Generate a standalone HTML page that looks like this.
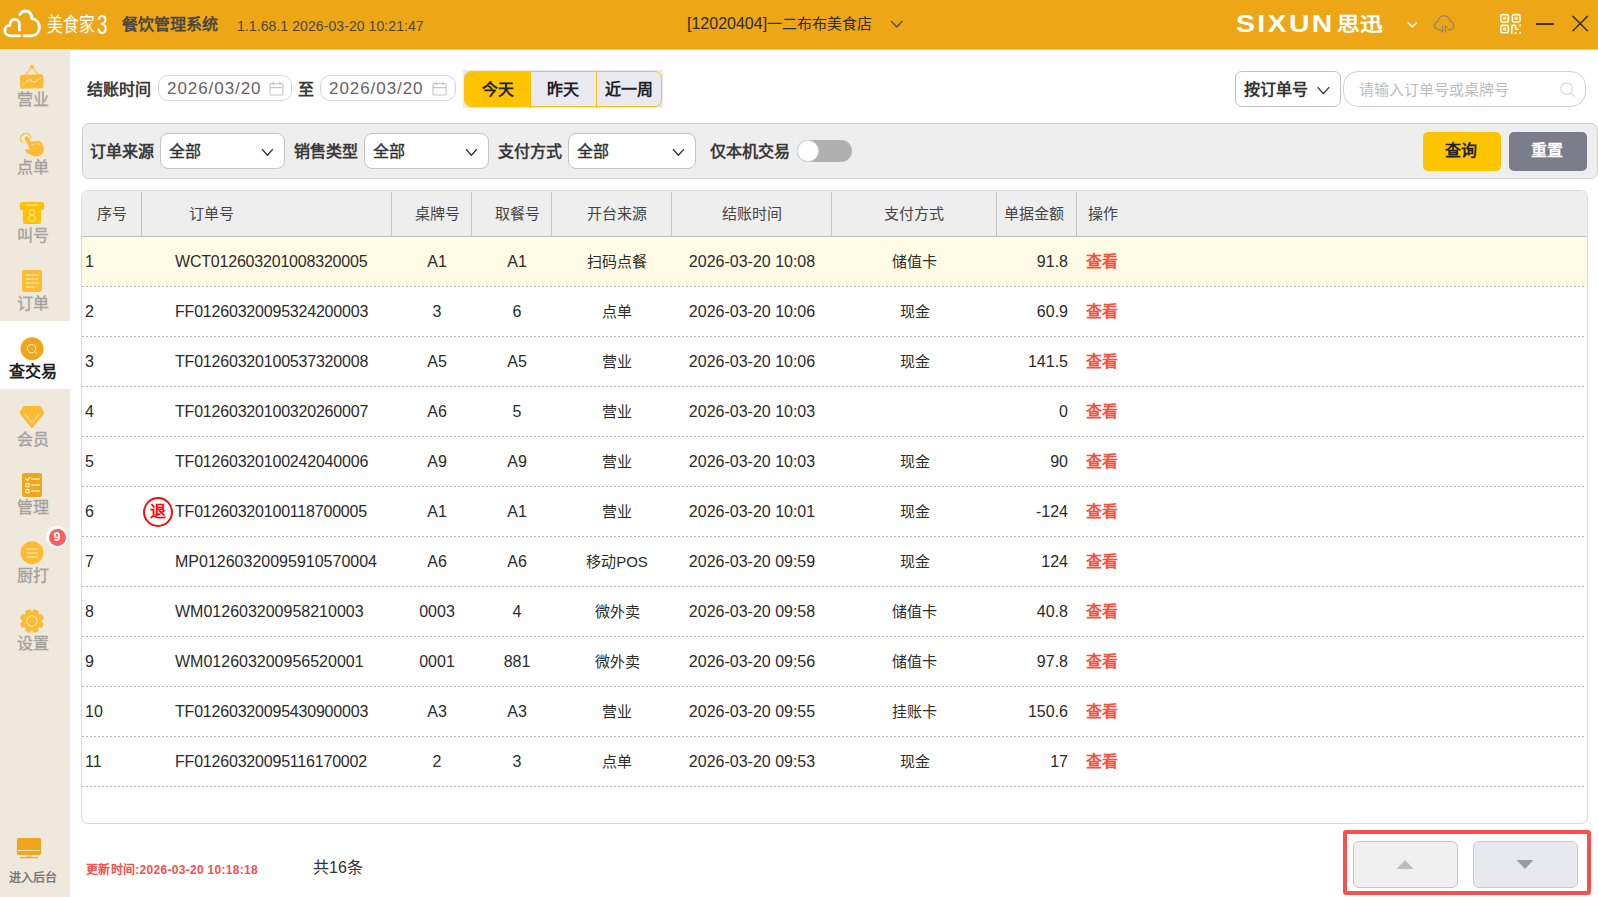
<!DOCTYPE html>
<html lang="zh-CN">
<head>
<meta charset="utf-8">
<title>美食家3 餐饮管理系统</title>
<style>
*{box-sizing:border-box;margin:0;padding:0}
html,body{width:1598px;height:897px;overflow:hidden;background:#fff}
body{position:relative;font-family:"Liberation Sans",sans-serif;color:#333;font-size:16px}
.a{position:absolute}
.t{position:absolute;white-space:nowrap;line-height:20px;height:20px}
.b{font-weight:bold}
svg{position:absolute;overflow:visible}
/* header */
#hd{left:0;top:0;width:1598px;height:49px;background:#EDA615;border-bottom:1px solid #F0A30C}
#hdline{left:70px;top:49px;width:1528px;height:1px;background:#CDD1DC}
/* sidebar */
#sb{left:0;top:49px;width:70px;height:848px;background:#EFE9DD}
#sbact{left:0;top:321px;width:70px;height:68px;background:#fff}
.sl{position:absolute;left:0;width:66px;text-align:center;font-size:16px;line-height:20px;height:20px;color:#A5A19E;-webkit-text-stroke:.35px;white-space:nowrap}
/* inputs */
.box{position:absolute;background:#fff;border:1px solid #C4C4C4}
.lbl{font-size:16px;font-weight:bold;color:#3A3A3A}
/* table */
#tb{left:81px;top:190px;width:1507px;height:634px;border:1px solid #DADADA;border-radius:7px;background:#fff}
#th{left:82px;top:191px;width:1505px;height:45px;background:#EEEEEE;border-radius:6px 6px 0 0}
#thl{left:82px;top:236px;width:1505px;height:1px;background:#BDBDBD}
.vs{position:absolute;top:192px;width:1px;height:44px;background:#C2C2C2}
.h{position:absolute;top:204px;font-size:15px;line-height:20px;height:20px;color:#444;white-space:nowrap}
.dl{position:absolute;left:82px;width:1502px;height:1px;background:repeating-linear-gradient(90deg,#B4B4B4 0,#B4B4B4 2px,transparent 2px,transparent 4px)}
.c{position:absolute;font-size:16px;line-height:20px;height:20px;color:#2B2B2B;white-space:nowrap}
.cc{transform:translateX(-50%)}
.cr{transform:translateX(-100%)}
.z{font-size:15px}
.v{color:#F5523C;font-weight:bold;font-size:16px}
</style>
</head>
<body>
<!-- ===== header ===== -->
<div class="a" id="hd"></div>
<div class="a" id="hdline"></div>
<svg style="left:0;top:0" width="120" height="49" viewBox="0 0 120 49" fill="none" stroke="#fff" stroke-width="2.8" stroke-linecap="round" stroke-linejoin="round">
<path d="M19.8 35.8H11.2C7 35.8 4.8 33.2 4.8 30.4C4.8 27.6 6.9 25.6 9.8 25.4C9.8 21.6 12 19.4 14.8 19.4C17.6 19.4 19.4 21.6 19.4 24.6V30.2"/>
<path d="M19.8 14.6C21 12.2 23 11 25.4 11C29.2 11 31.6 14 31.9 18.6C36.4 19.2 39.4 22.8 39.4 27.4C39.4 32 36.2 35.8 31.8 35.8H24"/>
</svg>
<div class="t" style="left:47px;top:13px;height:24px;line-height:24px;font-size:20px;color:#fff;font-weight:300;transform:scaleX(.79);transform-origin:0 50%">美食家</div>
<div class="t" style="left:97px;top:11px;height:28px;line-height:28px;font-size:27px;color:#fff;font-weight:300;transform:scaleX(.7);transform-origin:0 50%">3</div>
<div class="t b" style="left:122px;top:15px;font-size:16px;color:#4B4742">餐饮管理系统</div>
<div class="t" style="left:237px;top:16px;font-size:14px;letter-spacing:.08px;color:#4B4742">1.1.68.1 2026-03-20 10:21:47</div>
<div class="t" style="left:687px;top:14px;font-size:15px;color:#2E2B26"><span style="font-size:16px">[12020404]</span>一二布布美食店</div>
<svg style="left:889px;top:19px" width="16" height="12" viewBox="0 0 16 12" fill="none" stroke="#47506C" stroke-width="1.4" stroke-linecap="round" stroke-linejoin="round"><path d="M2.5 2.5L7.8 8L13 2.5"/></svg>
<!-- SIXUN logo -->
<div class="t b" style="left:1236px;top:12px;height:24px;line-height:24px;font-size:24px;color:#fff;transform:scaleX(1.185);transform-origin:0 50%;letter-spacing:2px">SIXUN</div>
<div class="t b" style="left:1337px;top:13px;height:24px;line-height:24px;font-size:19px;font-weight:900;color:#fff;transform:scaleX(1.2);transform-origin:0 50%">思迅</div>
<svg style="left:1404px;top:19px" width="16" height="12" viewBox="0 0 16 12" fill="none" stroke="#FFF8E8" stroke-width="1.5" stroke-linecap="round" stroke-linejoin="round"><path d="M4.1 3.7L8.3 7.9L12.5 3.7"/></svg>
<!-- cloud sync -->
<svg style="left:1432px;top:12px" width="24" height="24" viewBox="0 0 24 24" fill="none" stroke="#8C8676" stroke-width="1.2" stroke-linecap="round" stroke-linejoin="round">
<path d="M8.2 17.6H7C4.4 17.6 2.6 15.8 2.6 13.6C2.6 11.6 4 10 6 9.7C6.3 6.3 8.8 3.8 12 3.8C15.2 3.8 17.6 6 18 9.2C20.2 9.6 21.6 11.2 21.6 13.4C21.6 15.8 19.8 17.6 17.4 17.6H16.2"/>
<path d="M10.6 14V20M10.6 20L9.2 18.4M13.4 20V14M13.4 14L14.8 15.6"/>
</svg>
<!-- qr -->
<svg style="left:1499px;top:13px" width="24" height="22" viewBox="0 0 24 22" fill="none" stroke="#fff" stroke-width="1.6" stroke-linejoin="round">
<rect x="1.8" y="1.6" width="7.6" height="7.4" rx="1.6"/><rect x="13.4" y="1.6" width="7.6" height="7.4" rx="1.6"/><rect x="1.8" y="12.4" width="7.6" height="7.4" rx="1.6"/>
<rect x="4.6" y="4.4" width="2" height="1.8" stroke-width="1.2"/><rect x="16.2" y="4.4" width="2" height="1.8" stroke-width="1.2"/><rect x="4.6" y="15.2" width="2" height="1.8" stroke-width="1.2"/>
<path d="M12.8 20.2V12.4H16.6V16.2H19.2" stroke-linecap="round"/><path d="M21.2 12v.6M16.6 19.6v.6M21.2 19.6v.6" stroke-linecap="round" stroke-width="1.8"/>
</svg>
<div class="a" style="left:1536px;top:23px;width:18px;height:1.5px;background:#3A3428"></div>
<svg style="left:1570px;top:13px" width="20" height="20" viewBox="0 0 20 20" fill="none" stroke="#3A3428" stroke-width="1.5" stroke-linecap="round"><path d="M3 3.4L17.4 17.8M17.4 3.4L3 17.8"/></svg>
<!-- ===== sidebar ===== -->
<div class="a" id="sb"></div>
<div class="a" id="sbact"></div>
<!-- 营业 -->
<svg style="left:16px;top:60px" width="32" height="32" viewBox="16 60 32 32">
<circle cx="31.9" cy="66.7" r="2" fill="#FDBB33"/>
<path d="M31.9 66.7L25.6 75M31.9 66.7L38.1 75" stroke="#FDBB33" stroke-width="1.1" fill="none"/>
<rect x="20" y="74.4" width="23.4" height="14" rx="2.2" fill="#FDBB33" transform="rotate(-1.5 31.7 81.4)"/>
<path d="M23.6 84.4L29.7 79.4L33.8 82.6L40.3 78.3" stroke="#FFF3D6" stroke-width="1" fill="none" stroke-linecap="round" stroke-linejoin="round"/>
</svg>
<div class="sl" style="top:90px">营业</div>
<!-- 点单 -->
<svg style="left:16px;top:128px" width="32" height="32" viewBox="16 128 32 32">
<path d="M22.4 142.6A5.3 5.3 0 1 1 31.2 138.2" stroke="#FDBB33" stroke-width="1.2" fill="none" stroke-linecap="round"/>
<path d="M26.6 138.4L32.8 150.4" stroke="#FDBB33" stroke-width="4" stroke-linecap="round" fill="none"/>
<path d="M30.2 143.6C30.6 141.6 32.6 140.8 34 141.8C35 140.4 37 140.4 37.8 141.6C39 140.6 41 141.2 41.4 142.8C43.4 145 44.4 148 43.6 151C42.6 154.8 39.2 156.8 35.6 156.4C32.6 156.2 29.6 154.6 26.6 152.6C24.6 151.2 25.4 148.8 27.6 149C29 149.2 30.2 149.8 31.4 150.4Z" fill="#FDBB33"/>
<path d="M32.3 144.4v.6M35.6 143.4v.6M38.9 143.6v.6" stroke="#FFE9B8" stroke-width="1.1" stroke-linecap="round"/>
</svg>
<div class="sl" style="top:158px">点单</div>
<!-- 叫号 -->
<svg style="left:16px;top:196px" width="32" height="32" viewBox="16 196 32 32">
<rect x="19.9" y="202" width="24.3" height="8" rx="2" fill="#FFC107"/>
<path d="M22.9 208H41.1V222A2 2 0 0 1 39.1 224H24.9A2 2 0 0 1 22.9 222Z" fill="#FFC107"/>
<path d="M25.8 205H38.4" stroke="#FFE28C" stroke-width="1.5" stroke-linecap="round"/>
<circle cx="32" cy="212.3" r="2.7" fill="none" stroke="#FFECB0" stroke-width=".8"/>
<circle cx="32" cy="218.2" r="3.3" fill="none" stroke="#FFECB0" stroke-width=".8"/>
</svg>
<div class="sl" style="top:226px">叫号</div>
<!-- 订单 -->
<svg style="left:16px;top:264px" width="32" height="32" viewBox="16 264 32 32">
<rect x="22" y="270" width="20" height="22" rx="2.2" fill="#FDBB33"/>
<path d="M25.9 275H38.1M25.9 279H38.1M25.9 283H38.1M25.9 287H34.1" stroke="#FFE29C" stroke-width="1.5" stroke-linecap="round"/>
</svg>
<div class="sl" style="top:294px">订单</div>
<!-- 查交易 (active) -->
<svg style="left:16px;top:332px" width="32" height="32" viewBox="16 332 32 32">
<circle cx="32" cy="348.7" r="11.5" fill="#EEA61C"/>
<circle cx="31.6" cy="348.6" r="4.2" fill="none" stroke="#FFF6E0" stroke-width=".9"/>
<path d="M34.7 351.6L36.8 353.6" stroke="#FFF6E0" stroke-width=".9" stroke-linecap="round"/>
</svg>
<div class="sl b" style="top:362px;color:#222;left:0;-webkit-text-stroke:0">查交易</div>
<!-- 会员 -->
<svg style="left:16px;top:400px" width="32" height="32" viewBox="16 400 32 32">
<path d="M24.4 406H39.6Q40.4 406 40.9 406.8L44 411.9Q44.6 413 43.8 414L33.2 427.2Q32 428.4 30.8 427.2L20.2 414Q19.4 413 20 411.9L23.1 406.8Q23.6 406 24.4 406Z" fill="#FDBB33"/>
<path d="M25.3 414.4L32 423.2L38.8 414.4" stroke="#FFF0CC" stroke-width="1" fill="none" stroke-linecap="round" stroke-linejoin="round"/>
</svg>
<div class="sl" style="top:430px">会员</div>
<!-- 管理 -->
<svg style="left:16px;top:468px" width="32" height="32" viewBox="16 468 32 32">
<rect x="22" y="473" width="20" height="24" rx="2.2" fill="#EEA61C"/>
<path d="M31.8 479H39.2M31.8 485H39.2M31.8 491H39.2" stroke="#FCE7BC" stroke-width="1.6" stroke-linecap="round"/>
<path d="M25.6 478.8L27.4 480.4L30 477.4" stroke="#FFF6E0" stroke-width="1.2" fill="none" stroke-linecap="round" stroke-linejoin="round"/>
<circle cx="27.5" cy="485.2" r="1.8" fill="none" stroke="#FFF6E0" stroke-width="1.1"/>
<circle cx="27.5" cy="491.2" r="1.8" fill="none" stroke="#FFF6E0" stroke-width="1.1"/>
</svg>
<div class="sl" style="top:498px">管理</div>
<!-- 厨打 -->
<svg style="left:16px;top:536px" width="32" height="32" viewBox="16 536 32 32">
<circle cx="32" cy="552.7" r="11.5" fill="#FDBB33"/>
<path d="M26.4 548.9H37.6M26.4 552.9H37.6M26.4 556.9H37.6" stroke="#FFE29C" stroke-width="1.5"/>
</svg>
<div class="a" style="left:46px;top:526px;width:22px;height:22px;border-radius:11px;background:#fff"></div>
<div class="a b" style="left:48.5px;top:528.5px;width:17px;height:17px;border-radius:9px;background:#FF5C5C;color:#fff;font-size:12.5px;line-height:17px;text-align:center">9</div>
<div class="sl" style="top:566px">厨打</div>
<!-- 设置 -->
<svg style="left:16px;top:604px" width="32" height="32" viewBox="16 604 32 32">
<g transform="translate(31.9 621) rotate(22.5)" fill="#FDBB33">
<circle r="9.8"/>
<rect x="-2.9" y="-12" width="5.8" height="6" rx="1.9" transform="rotate(0)"/><rect x="-2.9" y="-12" width="5.8" height="6" rx="1.9" transform="rotate(45)"/><rect x="-2.9" y="-12" width="5.8" height="6" rx="1.9" transform="rotate(90)"/><rect x="-2.9" y="-12" width="5.8" height="6" rx="1.9" transform="rotate(135)"/><rect x="-2.9" y="-12" width="5.8" height="6" rx="1.9" transform="rotate(180)"/><rect x="-2.9" y="-12" width="5.8" height="6" rx="1.9" transform="rotate(225)"/><rect x="-2.9" y="-12" width="5.8" height="6" rx="1.9" transform="rotate(270)"/><rect x="-2.9" y="-12" width="5.8" height="6" rx="1.9" transform="rotate(315)"/>
<circle r="5.2" fill="none" stroke="#FFEFC6" stroke-width=".9"/>
</g>
</svg>
<div class="sl" style="top:634px">设置</div>
<!-- 进入后台 -->
<svg style="left:14px;top:834px" width="32" height="28" viewBox="14 834 32 28">
<rect x="16.9" y="837.9" width="24.2" height="17.2" rx="2.2" fill="#EEA61C"/>
<path d="M18 850.5H40" stroke="#FCEBC8" stroke-width=".9"/>
<path d="M26 855.4H32V857H26Z" fill="#F3C978"/>
<path d="M20 857.6H38" stroke="#EEA61C" stroke-width="1.3"/>
</svg>
<div class="sl" style="top:868px;font-size:12px;color:#6F6F72">进入后台</div>
<!-- ===== filter row 1 ===== -->
<div class="t lbl" style="left:87px;top:80px">结账时间</div>
<div class="box" style="left:158px;top:75px;width:134px;height:26px;border-radius:10px;border-color:#D6D6D6"></div>
<div class="t" style="left:167px;top:79px;font-size:17px;letter-spacing:.94px;color:#676363">2026/03/20</div>
<svg style="left:268px;top:80px" width="17" height="17" viewBox="0 0 17 17" fill="none" stroke="#C6C6C6" stroke-width="1.1"><rect x="2" y="3.6" width="13" height="11.4" rx="1"/><path d="M2 7.6H15M5.2 1.6V5M11.8 1.6V5"/></svg>
<div class="t lbl" style="left:298px;top:80px">至</div>
<div class="box" style="left:320px;top:75px;width:136px;height:26px;border-radius:10px;border-color:#D6D6D6"></div>
<div class="t" style="left:329px;top:79px;font-size:17px;letter-spacing:.94px;color:#676363">2026/03/20</div>
<svg style="left:431px;top:80px" width="17" height="17" viewBox="0 0 17 17" fill="none" stroke="#C6C6C6" stroke-width="1.1"><rect x="2" y="3.6" width="13" height="11.4" rx="1"/><path d="M2 7.6H15M5.2 1.6V5M11.8 1.6V5"/></svg>
<!-- segmented buttons -->
<div class="a" style="left:463px;top:70px;width:200px;height:38px;background:#E9E9F1"></div>
<div class="a" style="left:464px;top:71px;width:198px;height:36px;border:1px solid #FFC20E;border-radius:7px;overflow:hidden">
<div class="a" style="left:-1px;top:-1px;width:67px;height:36px;background:#FFC300"></div>
<div class="a" style="left:131px;top:0;width:1px;height:34px;background:#FFC20E"></div>
</div>
<div class="t b" style="left:482px;top:80px;font-size:16px;color:#222">今天</div>
<div class="t b" style="left:547px;top:80px;font-size:16px;color:#222">昨天</div>
<div class="t b" style="left:605px;top:80px;font-size:16px;color:#222">近一周</div>
<!-- search type + search box -->
<div class="box" style="left:1235px;top:71px;width:106px;height:36px;border-radius:7px;border-color:#C0C0C0"></div>
<div class="t lbl" style="left:1244px;top:80px;color:#333">按订单号</div>
<svg style="left:1315px;top:84px" width="16" height="14" viewBox="0 0 16 14" fill="none" stroke="#333" stroke-width="1.4" stroke-linecap="round" stroke-linejoin="round"><path d="M3 3.6L8.4 9.6L13.8 3.6"/></svg>
<div class="box" style="left:1343px;top:71px;width:243px;height:36px;border-radius:15px;border-color:#D0D0D0"></div>
<div class="t" style="left:1359px;top:80px;font-size:15px;color:#BDBDBD">请输入订单号或桌牌号</div>
<svg style="left:1558px;top:80px" width="20" height="20" viewBox="0 0 20 20" fill="none" stroke="#DDDDDD" stroke-width="1.3" stroke-linecap="round"><circle cx="8.6" cy="8.6" r="5.8"/><path d="M13 13L16.6 16.4"/></svg>
<!-- ===== filter row 2 ===== -->
<div class="a" style="left:82px;top:123px;width:1516px;height:56px;background:#EEEEEE;border:1px solid #CFCFCF;border-radius:7px"></div>
<div class="t lbl" style="left:90px;top:142px">订单来源</div>
<div class="box" style="left:160px;top:133px;width:125px;height:36px;border-radius:8px"></div>
<div class="t" style="left:169px;top:142px;font-size:16px;color:#2E2E2E;-webkit-text-stroke:.35px">全部</div>
<svg style="left:259px;top:146px" width="16" height="14" viewBox="0 0 16 14" fill="none" stroke="#333" stroke-width="1.4" stroke-linecap="round" stroke-linejoin="round"><path d="M3.4 3.6L8.4 9.2L13.4 3.6"/></svg>
<div class="t lbl" style="left:294px;top:142px">销售类型</div>
<div class="box" style="left:364px;top:133px;width:125px;height:36px;border-radius:8px"></div>
<div class="t" style="left:373px;top:142px;font-size:16px;color:#2E2E2E;-webkit-text-stroke:.35px">全部</div>
<svg style="left:463px;top:146px" width="16" height="14" viewBox="0 0 16 14" fill="none" stroke="#333" stroke-width="1.4" stroke-linecap="round" stroke-linejoin="round"><path d="M3.4 3.6L8.4 9.2L13.4 3.6"/></svg>
<div class="t lbl" style="left:498px;top:142px">支付方式</div>
<div class="box" style="left:568px;top:133px;width:128px;height:36px;border-radius:8px"></div>
<div class="t" style="left:577px;top:142px;font-size:16px;color:#2E2E2E;-webkit-text-stroke:.35px">全部</div>
<svg style="left:670px;top:146px" width="16" height="14" viewBox="0 0 16 14" fill="none" stroke="#333" stroke-width="1.4" stroke-linecap="round" stroke-linejoin="round"><path d="M3.4 3.6L8.4 9.2L13.4 3.6"/></svg>
<div class="t lbl" style="left:710px;top:142px">仅本机交易</div>
<div class="a" style="left:797px;top:140px;width:55px;height:22px;border-radius:11px;background:#B0B0B0"></div>
<div class="a" style="left:797px;top:140px;width:22px;height:22px;border-radius:11px;background:#fff;border:1px solid #D8D8D8"></div>
<div class="a" style="left:1423px;top:132px;width:78px;height:39px;border-radius:5px;background:#FFC400"></div>
<div class="t b" style="left:1445px;top:141px;font-size:16px;color:#222">查询</div>
<div class="a" style="left:1509px;top:132px;width:78px;height:39px;border-radius:5px;background:#7B7D8B"></div>
<div class="t b" style="left:1531px;top:141px;font-size:16px;color:#fff">重置</div>
<!-- ===== table ===== -->
<div class="a" id="tb"></div><div class="a" id="th"></div><div class="a" id="thl"></div>
<div class="vs" style="left:141px"></div>
<div class="vs" style="left:391px"></div>
<div class="vs" style="left:471px"></div>
<div class="vs" style="left:551px"></div>
<div class="vs" style="left:671px"></div>
<div class="vs" style="left:831px"></div>
<div class="vs" style="left:996px"></div>
<div class="vs" style="left:1076px"></div>
<div class="h" style="left:97px">序号</div>
<div class="h" style="left:189px">订单号</div>
<div class="h cc" style="left:437px">桌牌号</div>
<div class="h cc" style="left:517px">取餐号</div>
<div class="h cc" style="left:617px">开台来源</div>
<div class="h cc" style="left:751.5px">结账时间</div>
<div class="h cc" style="left:913.5px">支付方式</div>
<div class="h cc" style="left:1034px">单据金额</div>
<div class="h" style="left:1088px">操作</div>
<div class="a" style="left:82px;top:237px;width:1505px;height:49px;background:#FFFBE4"></div>
<!-- row 1 -->
<div class="c" style="left:85px;top:252px">1</div>
<div class="c" style="left:175px;top:252px;letter-spacing:-.2px">WCT012603201008320005</div>
<div class="c cc" style="left:437px;top:252px">A1</div>
<div class="c cc" style="left:517px;top:252px">A1</div>
<div class="c cc z" style="left:617px;top:252px">扫码点餐</div>
<div class="c cc" style="left:752px;top:252px">2026-03-20 10:08</div>
<div class="c cc z" style="left:914.5px;top:252px">储值卡</div>
<div class="c cr" style="left:1068px;top:252px">91.8</div>
<div class="c v" style="left:1086px;top:252px">查看</div>
<div class="dl" style="top:286px"></div>
<!-- row 2 -->
<div class="c" style="left:85px;top:302px">2</div>
<div class="c" style="left:175px;top:302px;letter-spacing:-.2px">FF01260320095324200003</div>
<div class="c cc" style="left:437px;top:302px">3</div>
<div class="c cc" style="left:517px;top:302px">6</div>
<div class="c cc z" style="left:617px;top:302px">点单</div>
<div class="c cc" style="left:752px;top:302px">2026-03-20 10:06</div>
<div class="c cc z" style="left:914.5px;top:302px">现金</div>
<div class="c cr" style="left:1068px;top:302px">60.9</div>
<div class="c v" style="left:1086px;top:302px">查看</div>
<div class="dl" style="top:336px"></div>
<!-- row 3 -->
<div class="c" style="left:85px;top:352px">3</div>
<div class="c" style="left:175px;top:352px;letter-spacing:-.2px">TF01260320100537320008</div>
<div class="c cc" style="left:437px;top:352px">A5</div>
<div class="c cc" style="left:517px;top:352px">A5</div>
<div class="c cc z" style="left:617px;top:352px">营业</div>
<div class="c cc" style="left:752px;top:352px">2026-03-20 10:06</div>
<div class="c cc z" style="left:914.5px;top:352px">现金</div>
<div class="c cr" style="left:1068px;top:352px">141.5</div>
<div class="c v" style="left:1086px;top:352px">查看</div>
<div class="dl" style="top:386px"></div>
<!-- row 4 -->
<div class="c" style="left:85px;top:402px">4</div>
<div class="c" style="left:175px;top:402px;letter-spacing:-.2px">TF01260320100320260007</div>
<div class="c cc" style="left:437px;top:402px">A6</div>
<div class="c cc" style="left:517px;top:402px">5</div>
<div class="c cc z" style="left:617px;top:402px">营业</div>
<div class="c cc" style="left:752px;top:402px">2026-03-20 10:03</div>
<div class="c cr" style="left:1068px;top:402px">0</div>
<div class="c v" style="left:1086px;top:402px">查看</div>
<div class="dl" style="top:436px"></div>
<!-- row 5 -->
<div class="c" style="left:85px;top:452px">5</div>
<div class="c" style="left:175px;top:452px;letter-spacing:-.2px">TF01260320100242040006</div>
<div class="c cc" style="left:437px;top:452px">A9</div>
<div class="c cc" style="left:517px;top:452px">A9</div>
<div class="c cc z" style="left:617px;top:452px">营业</div>
<div class="c cc" style="left:752px;top:452px">2026-03-20 10:03</div>
<div class="c cc z" style="left:914.5px;top:452px">现金</div>
<div class="c cr" style="left:1068px;top:452px">90</div>
<div class="c v" style="left:1086px;top:452px">查看</div>
<div class="dl" style="top:486px"></div>
<!-- row 6 -->
<div class="c" style="left:85px;top:502px">6</div>
<div class="a b" style="left:143px;top:497px;width:30px;height:30px;border:2px solid #FF0A0A;border-radius:15px;color:#FF0A0A;font-size:16px;line-height:25px;text-align:center">退</div>
<div class="c" style="left:175px;top:502px;letter-spacing:-.2px">TF01260320100118700005</div>
<div class="c cc" style="left:437px;top:502px">A1</div>
<div class="c cc" style="left:517px;top:502px">A1</div>
<div class="c cc z" style="left:617px;top:502px">营业</div>
<div class="c cc" style="left:752px;top:502px">2026-03-20 10:01</div>
<div class="c cc z" style="left:914.5px;top:502px">现金</div>
<div class="c cr" style="left:1068px;top:502px">-124</div>
<div class="c v" style="left:1086px;top:502px">查看</div>
<div class="dl" style="top:536px"></div>
<!-- row 7 -->
<div class="c" style="left:85px;top:552px">7</div>
<div class="c" style="left:175px;top:552px">MP01260320095910570004</div>
<div class="c cc" style="left:437px;top:552px">A6</div>
<div class="c cc" style="left:517px;top:552px">A6</div>
<div class="c cc z" style="left:617px;top:552px">移动POS</div>
<div class="c cc" style="left:752px;top:552px">2026-03-20 09:59</div>
<div class="c cc z" style="left:914.5px;top:552px">现金</div>
<div class="c cr" style="left:1068px;top:552px">124</div>
<div class="c v" style="left:1086px;top:552px">查看</div>
<div class="dl" style="top:586px"></div>
<!-- row 8 -->
<div class="c" style="left:85px;top:602px">8</div>
<div class="c" style="left:175px;top:602px">WM012603200958210003</div>
<div class="c cc" style="left:437px;top:602px">0003</div>
<div class="c cc" style="left:517px;top:602px">4</div>
<div class="c cc z" style="left:617px;top:602px">微外卖</div>
<div class="c cc" style="left:752px;top:602px">2026-03-20 09:58</div>
<div class="c cc z" style="left:914.5px;top:602px">储值卡</div>
<div class="c cr" style="left:1068px;top:602px">40.8</div>
<div class="c v" style="left:1086px;top:602px">查看</div>
<div class="dl" style="top:636px"></div>
<!-- row 9 -->
<div class="c" style="left:85px;top:652px">9</div>
<div class="c" style="left:175px;top:652px">WM012603200956520001</div>
<div class="c cc" style="left:437px;top:652px">0001</div>
<div class="c cc" style="left:517px;top:652px">881</div>
<div class="c cc z" style="left:617px;top:652px">微外卖</div>
<div class="c cc" style="left:752px;top:652px">2026-03-20 09:56</div>
<div class="c cc z" style="left:914.5px;top:652px">储值卡</div>
<div class="c cr" style="left:1068px;top:652px">97.8</div>
<div class="c v" style="left:1086px;top:652px">查看</div>
<div class="dl" style="top:686px"></div>
<!-- row 10 -->
<div class="c" style="left:85px;top:702px">10</div>
<div class="c" style="left:175px;top:702px;letter-spacing:-.2px">TF01260320095430900003</div>
<div class="c cc" style="left:437px;top:702px">A3</div>
<div class="c cc" style="left:517px;top:702px">A3</div>
<div class="c cc z" style="left:617px;top:702px">营业</div>
<div class="c cc" style="left:752px;top:702px">2026-03-20 09:55</div>
<div class="c cc z" style="left:914.5px;top:702px">挂账卡</div>
<div class="c cr" style="left:1068px;top:702px">150.6</div>
<div class="c v" style="left:1086px;top:702px">查看</div>
<div class="dl" style="top:736px"></div>
<!-- row 11 -->
<div class="c" style="left:85px;top:752px">11</div>
<div class="c" style="left:175px;top:752px;letter-spacing:-.2px">FF01260320095116170002</div>
<div class="c cc" style="left:437px;top:752px">2</div>
<div class="c cc" style="left:517px;top:752px">3</div>
<div class="c cc z" style="left:617px;top:752px">点单</div>
<div class="c cc" style="left:752px;top:752px">2026-03-20 09:53</div>
<div class="c cc z" style="left:914.5px;top:752px">现金</div>
<div class="c cr" style="left:1068px;top:752px">17</div>
<div class="c v" style="left:1086px;top:752px">查看</div>
<div class="dl" style="top:786px"></div>
<!-- ===== footer ===== -->
<div class="t b" style="left:86px;top:860px;font-size:12px;color:#F8504A;letter-spacing:.3px">更新时间:2026-03-20 10:18:18</div>
<div class="t" style="left:313px;top:858px;font-size:16px;color:#333">共16条</div>
<div class="a" style="left:1343px;top:830px;width:248px;height:65px;border:4px solid #F8504F;border-radius:3px"></div>
<div class="a" style="left:1353px;top:841px;width:105px;height:47px;background:#F0F0F0;border:1px solid #C6C6C6;border-radius:6px"></div>
<svg style="left:1396px;top:859px" width="18" height="11" viewBox="0 0 18 11"><path d="M0.5 10L9 1L17.5 10Z" fill="#BDBDBD"/></svg>
<div class="a" style="left:1473px;top:841px;width:105px;height:47px;background:#E8E9EF;border:1px solid #CACACA;border-radius:6px"></div>
<svg style="left:1516px;top:859px" width="18" height="11" viewBox="0 0 18 11"><path d="M0.5 1L9 10L17.5 1Z" fill="#9A9A9A"/></svg>
</body>
</html>
